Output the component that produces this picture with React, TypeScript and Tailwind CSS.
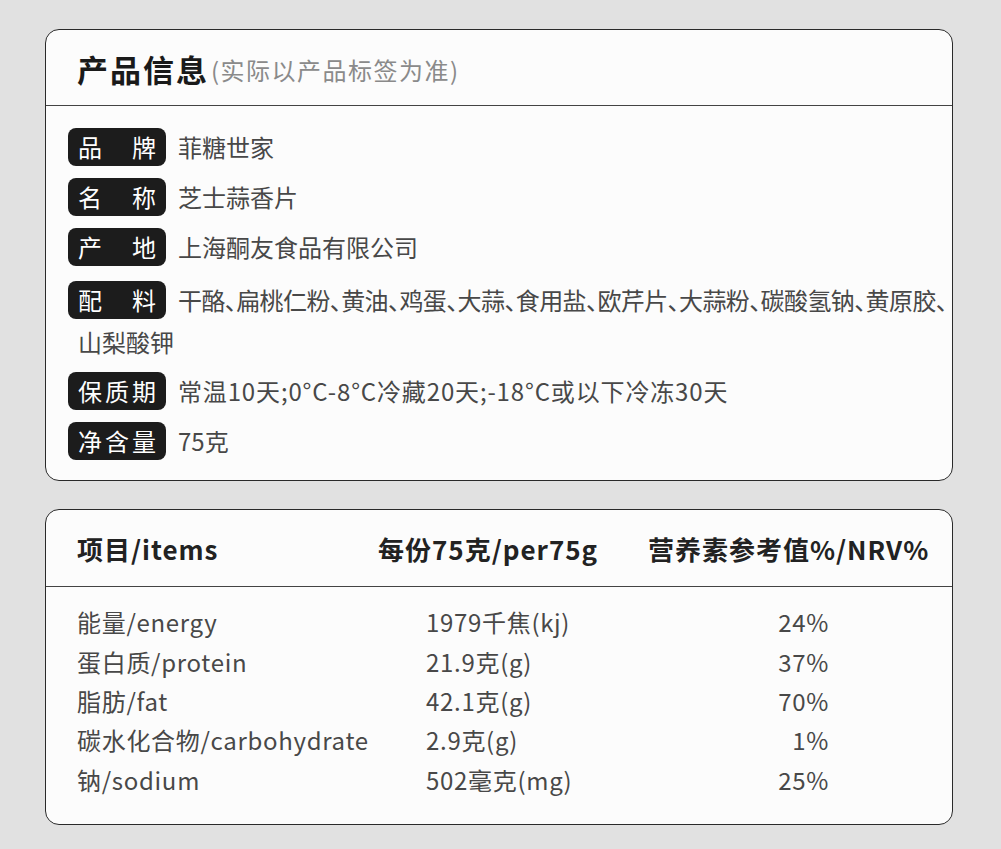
import React from 'react';

const infoRows = [
    { label: ['品', '牌'], value: '菲糖世家' },
    { label: ['名', '称'], value: '芝士蒜香片' },
    { label: ['产', '地'], value: '上海酮友食品有限公司' },
];

const nutrition = [
    { name: '能量/energy', amount: '1979千焦(kj)', nrv: '24%' },
    { name: '蛋白质/protein', amount: '21.9克(g)', nrv: '37%' },
    { name: '脂肪/fat', amount: '42.1克(g)', nrv: '70%' },
    { name: '碳水化合物/carbohydrate', amount: '2.9克(g)', nrv: '1%' },
    { name: '钠/sodium', amount: '502毫克(mg)', nrv: '25%' },
];

const Badge: React.FC<{ parts: string[] }> = ({ parts }) => (
    <span className="inline-flex h-[38px] w-[98px] shrink-0 items-center justify-between rounded-[8px] bg-[#1c1c1c] px-[10px] align-middle text-[24px] leading-none text-white">
        {parts.map((p, i) => <span key={i}>{p}</span>)}
    </span>
);

const App: React.FC = () => {
    return (
        <div className="min-h-screen bg-[#e1e1e1] pt-[29px] pl-[45px] [font-family:'Noto_Sans_CJK_SC',sans-serif]">
            {/* 产品信息 */}
            <div className="w-[908px] overflow-hidden rounded-[14px] border border-[#2a2a2a] bg-[#fcfcfc]">
                <div className="flex h-[76px] items-center border-b border-[#444] pt-[3px] pl-[31px]">
                    <span className="text-[31px] font-bold tracking-[2px] text-[#1a1a1a]">产品信息</span>
                    <span className="ml-[2px] mt-[2px] text-[24px] tracking-[1.5px] text-[#8a8a8a]">(实际以产品标签为准)</span>
                </div>
                <div className="pt-[22px] pb-[20px] pl-[22px] pr-[6px] text-[24px] text-[#484848]">
                    {infoRows.map((r, i) => (
                        <div key={i} className="mb-[12px] flex h-[38px] items-center">
                            <Badge parts={r.label} />
                            <span className="ml-[12px]">{r.value}</span>
                        </div>
                    ))}
                    <div className="mb-[9px] -mt-[2px] whitespace-nowrap pl-[10px] leading-[42px]">
                        <span className="-ml-[10px] mr-[12px] inline-flex align-middle">
                            <Badge parts={['配', '料']} />
                        </span>
                        <span className="align-middle tracking-[-0.6px] [font-feature-settings:'halt']">干酪、扁桃仁粉、黄油、鸡蛋、大蒜、食用盐、欧芹片、大蒜粉、碳酸氢钠、黄原胶、</span>
                        <br />
                        <span>山梨酸钾</span>
                    </div>
                    <div className="mb-[12px] flex h-[38px] items-center">
                        <Badge parts={['保', '质', '期']} />
                        <span className="ml-[12px] tracking-[0.85px]">常温10天;0°C-8°C冷藏20天;-18°C或以下冷冻30天</span>
                    </div>
                    <div className="flex h-[38px] items-center">
                        <Badge parts={['净', '含', '量']} />
                        <span className="ml-[12px]">75克</span>
                    </div>
                </div>
            </div>

            {/* 营养成分表 */}
            <div className="mt-[28px] w-[908px] overflow-hidden rounded-[14px] border border-[#2a2a2a] bg-[#fcfcfc]">
                <div className="flex h-[77px] items-center border-b border-[#444] pl-[31px] text-[26px] font-bold tracking-[1px] text-[#222]">
                    <span className="w-[301px]">项目/items</span>
                    <span className="w-[270px]">每份75克/per75g</span>
                    <span>营养素参考值%/NRV%</span>
                </div>
                <div className="pt-[15px] pb-[25px] pl-[31px] text-[24px] leading-[39.3px] tracking-[0.7px] text-[#484848]">
                    {nutrition.map((n, i) => (
                        <div key={i} className="flex">
                            <span className="w-[349px]">{n.name}</span>
                            <span className="w-[300px]">{n.amount}</span>
                            <span className="w-[103px] text-right">{n.nrv}</span>
                        </div>
                    ))}
                </div>
            </div>
        </div>
    );
};

export default App;
